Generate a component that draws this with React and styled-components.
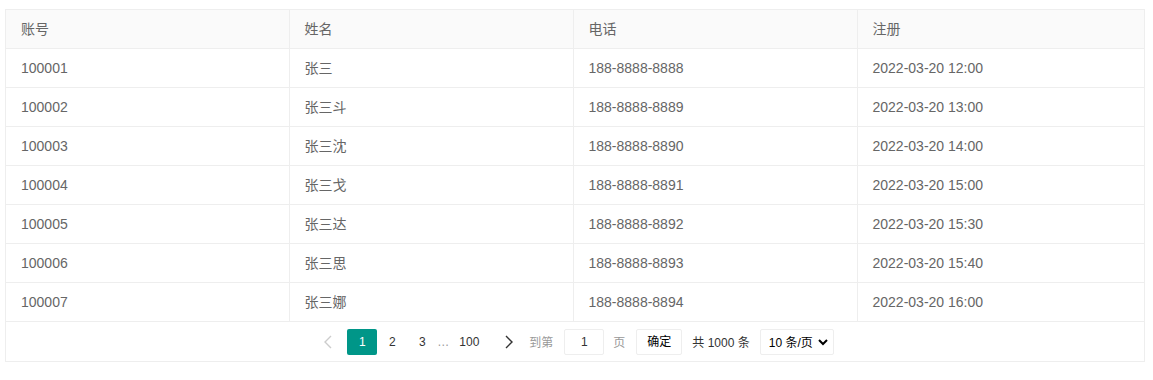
import React from 'react'
import styled, { createGlobalStyle } from 'styled-components'

const GlobalStyle = createGlobalStyle`
  body {
    margin: 0;
    padding: 9px 0 0 5px;
    background: #fff;
    font-family: "Liberation Sans", "Noto Sans CJK SC", sans-serif;
  }
`

const Wrapper = styled.div`
  width: 1140px;
  border: 1px solid #eee;
  box-sizing: border-box;
  color: #666;
  font-size: 14px;
`

const Table = styled.table`
  width: 100%;
  border-collapse: collapse;
  table-layout: fixed;
`

const HeadCell = styled.th`
  height: 36px;
  padding: 0 15px 2px;
  text-align: left;
  font-weight: 400;
  background: #fafafa;
  border-bottom: 1px solid #eee;
  border-left: ${p => (p.first ? 'none' : '1px solid #eee')};
`

const Cell = styled.td`
  height: ${p => (p.cjk ? '36px' : '38px')};
  padding: 0 15px ${p => (p.cjk ? '2px' : '0')};
  border-bottom: 1px solid #eee;
  border-left: ${p => (p.first ? 'none' : '1px solid #eee')};
`

const Pager = styled.div`
  height: 39px;
  display: flex;
  align-items: center;
  justify-content: center;
  font-size: 12px;
  color: #333;
`

const Arrow = styled.span`
  width: ${p => p.w}px;
  margin: ${p => p.m};
  height: 26px;
  display: flex;
  align-items: center;
  justify-content: center;
`

const PageLink = styled.span`
  width: 30px;
  height: 26px;
  line-height: 26px;
  text-align: center;
  border-radius: 2px;
  background: ${p => (p.active ? '#009688' : 'transparent')};
  color: ${p => (p.active ? '#fff' : '#333')};
`

const Ellipsis = styled.span`
  width: 17px;
  color: #999;
`

const Label = styled.span`
  color: ${p => p.color || '#333'};
  margin-right: ${p => p.mr}px;
  white-space: nowrap;
`

const Input = styled.div`
  width: 40px;
  height: 26px;
  box-sizing: border-box;
  border: 1px solid #eee;
  border-radius: 2px;
  line-height: 24px;
  text-align: center;
  margin-right: 9px;
`

const Button = styled.div`
  width: 46px;
  height: 26px;
  box-sizing: border-box;
  border: 1px solid #eee;
  border-radius: 2px;
  line-height: 24px;
  text-align: center;
  margin-right: 10px;
  color: #000;
`

const Select = styled.div`
  width: 74px;
  height: 26px;
  box-sizing: border-box;
  border: 1px solid #eee;
  border-radius: 2px;
  display: flex;
  align-items: center;
  justify-content: space-between;
  padding: 0 5px 0 8px;
  color: #000;
  font-size: 12px;
  white-space: nowrap;
`

const rows = [
  ['100001', '张三', '188-8888-8888', '2022-03-20 12:00'],
  ['100002', '张三斗', '188-8888-8889', '2022-03-20 13:00'],
  ['100003', '张三沈', '188-8888-8890', '2022-03-20 14:00'],
  ['100004', '张三戈', '188-8888-8891', '2022-03-20 15:00'],
  ['100005', '张三达', '188-8888-8892', '2022-03-20 15:30'],
  ['100006', '张三思', '188-8888-8893', '2022-03-20 15:40'],
  ['100007', '张三娜', '188-8888-8894', '2022-03-20 16:00'],
]

const Chevron = ({ dir, color }) => (
  <svg width="8" height="14" viewBox="0 0 8 14">
    <path
      d={dir === 'left' ? 'M7 1 L1 7 L7 13' : 'M1 1 L7 7 L1 13'}
      fill="none"
      stroke={color}
      strokeWidth="1.4"
    />
  </svg>
)

export default function App() {
  return (
    <>
      <GlobalStyle />
      <Wrapper>
        <Table>
          <colgroup>
            <col style={{ width: 283 }} />
            <col style={{ width: 284 }} />
            <col style={{ width: 284 }} />
            <col />
          </colgroup>
          <thead>
            <tr>
              <HeadCell first>账号</HeadCell>
              <HeadCell>姓名</HeadCell>
              <HeadCell>电话</HeadCell>
              <HeadCell>注册</HeadCell>
            </tr>
          </thead>
          <tbody>
            {rows.map(r => (
              <tr key={r[0]}>
                {r.map((v, i) => (
                  <Cell key={i} first={i === 0} cjk={i === 1}>
                    {v}
                  </Cell>
                ))}
              </tr>
            ))}
          </tbody>
        </Table>
        <Pager>
          <Arrow w={24} m="0 7px 0 0">
            <Chevron dir="left" color="#ccc" />
          </Arrow>
          <PageLink active>1</PageLink>
          <PageLink>2</PageLink>
          <PageLink>3</PageLink>
          <Ellipsis>…</Ellipsis>
          <PageLink>100</PageLink>
          <Arrow w={40} m="0 0 0 5px">
            <Chevron dir="right" color="#333" />
          </Arrow>
          <Label color="#999" mr={11}>到第</Label>
          <Input>1</Input>
          <Label color="#999" mr={11}>页</Label>
          <Button>确定</Button>
          <Label mr={10}>共 1000 条</Label>
          <Select>
            <span>10 条/页</span>
            <svg width="10" height="8" viewBox="0 0 10 8">
              <path d="M1 2 L5 6 L9 2" fill="none" stroke="#000" strokeWidth="2" />
            </svg>
          </Select>
        </Pager>
      </Wrapper>
    </>
  )
}
